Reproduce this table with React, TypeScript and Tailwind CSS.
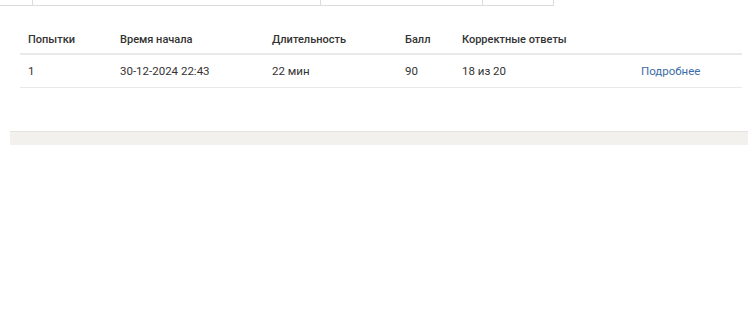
type Attempt = {
  num: number;
  start: string;
  duration: string;
  score: number;
  correct: string;
};

const attempts: Attempt[] = [
  { num: 1, start: "30-12-2024 22:43", duration: "22 мин", score: 90, correct: "18 из 20" },
];

export default function App() {
  return (
    <div className="min-h-[333px] bg-white text-[#333] font-['Roboto','Noto_Sans',sans-serif] text-[11.5px]">
      {/* tail of the table above */}
      <div className="flex h-[6px] w-[554px] border-b border-[#dcdcdc]">
        <div className="w-[32px]" />
        <div className="w-[288px] border-l border-[#dcdcdc]" />
        <div className="w-[162px] border-l border-[#dcdcdc]" />
        <div className="w-[72px] border-l border-r border-[#dcdcdc]" />
      </div>

      <div className="ml-[20px] mt-[15px] w-[722px]">
        <table className="w-full border-collapse text-left">
          <thead>
            <tr className="border-b-2 border-[#e9e9e9] text-[11px]">
              <th className="w-[92px] px-2 pt-[10px] pb-[4px] font-medium leading-[18px]">Попытки</th>
              <th className="w-[152px] px-2 pt-[10px] pb-[4px] font-medium leading-[18px]">Время начала</th>
              <th className="w-[133px] px-2 pt-[10px] pb-[4px] font-medium leading-[18px]">Длительность</th>
              <th className="w-[57px] px-2 pt-[10px] pb-[4px] font-medium leading-[18px]">Балл</th>
              <th className="w-[179px] px-2 pt-[10px] pb-[4px] font-medium leading-[18px]">Корректные ответы</th>
              <th className="px-2 pt-[10px] pb-[4px]" />
            </tr>
          </thead>
          <tbody>
            {attempts.map((a) => (
              <tr key={a.num} className="border-b border-[#e9e9e9]">
                <td className="px-2 py-2 leading-[16px]">{a.num}</td>
                <td className="px-2 py-2 leading-[16px]">{a.start}</td>
                <td className="px-2 py-2 leading-[16px]">{a.duration}</td>
                <td className="px-2 py-2 leading-[16px]">{a.score}</td>
                <td className="px-2 py-2 leading-[16px]">{a.correct}</td>
                <td className="px-2 py-2 leading-[16px]">
                  <a href="#" className="text-[#3d6da6]">
                    Подробнее
                  </a>
                </td>
              </tr>
            ))}
          </tbody>
        </table>
      </div>

      <div className="ml-[10px] mt-[43px] h-[14px] border-t border-[#e4e3df] bg-[#f2f1ee]" />
    </div>
  );
}
